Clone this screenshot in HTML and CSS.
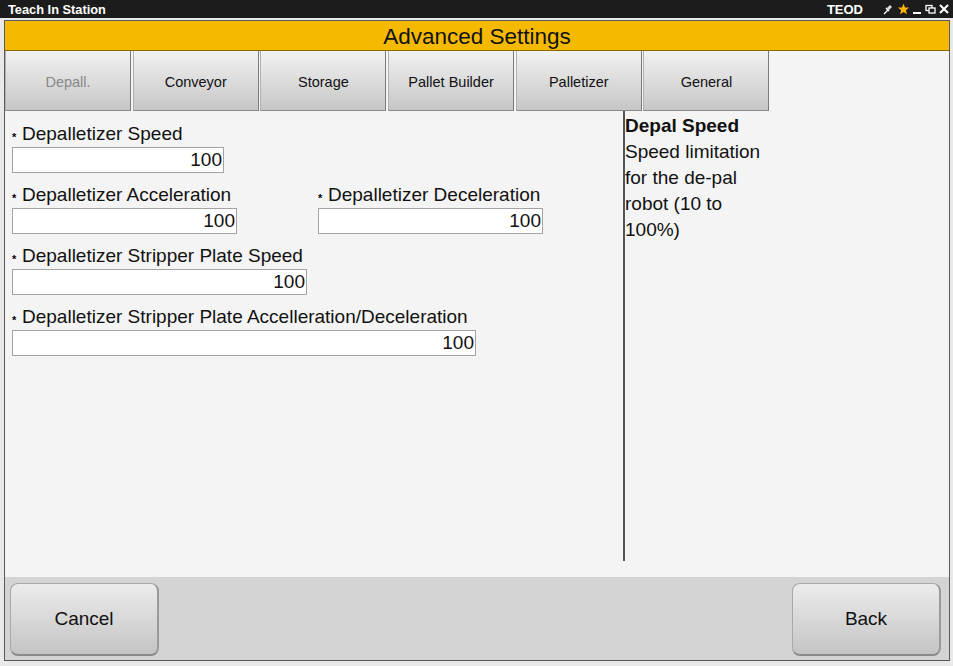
FILE: index.html
```html
<!DOCTYPE html>
<html>
<head>
<meta charset="utf-8">
<link rel="stylesheet" href="styles.css">
</head>
<body>
<div class="titlebar">
  <span class="app-title">Teach In Station</span>
  <div class="tb-right">
    <span class="teod">TEOD</span>
    <svg class="ic" width="12" height="12" viewBox="0 0 12 12"><path d="M2 11 L6 7" stroke="#fff" stroke-width="1.3"/><path d="M5 5 L8 2 L10 4 L7 7 Z" fill="#ddd"/><path d="M4 5 L7 8" stroke="#fff" stroke-width="1.5"/></svg>
    <svg class="ic" width="13" height="12" viewBox="0 0 13 12"><path d="M6.5 0.5 L8 4.4 L12.2 4.6 L8.9 7.2 L10 11.3 L6.5 9 L3 11.3 L4.1 7.2 L0.8 4.6 L5 4.4 Z" fill="#f7b500"/></svg>
    <svg class="ic" width="9" height="12" viewBox="0 0 9 12"><rect x="0" y="9" width="8" height="2" fill="#fff"/></svg>
    <svg class="ic" width="11" height="12" viewBox="0 0 11 12"><rect x="1" y="2.5" width="6" height="5" fill="none" stroke="#fff" stroke-width="1.3"/><rect x="4" y="5" width="6" height="5" fill="#1c1c1c" stroke="#fff" stroke-width="1.3"/></svg>
    <svg class="ic" width="10" height="12" viewBox="0 0 10 12"><path d="M1 2 L9 10 M9 2 L1 10" stroke="#fff" stroke-width="2"/></svg>
  </div>
</div>
<div class="frame">
  <div class="window">
    <div class="header">Advanced Settings</div>
    <div class="tabs">
      <div class="tab active">Depall.</div>
      <div class="tab">Conveyor</div>
      <div class="tab">Storage</div>
      <div class="tab">Pallet Builder</div>
      <div class="tab">Palletizer</div>
      <div class="tab">General</div>
    </div>
    <div class="body">
      <div class="form">
        <div class="row">
          <div class="field">
            <div class="label"><span class="star">*</span>Depalletizer Speed</div>
            <div class="input w1">100</div>
          </div>
        </div>
        <div class="row">
          <div class="field col1">
            <div class="label"><span class="star">*</span>Depalletizer Acceleration</div>
            <div class="input w2">100</div>
          </div>
          <div class="field">
            <div class="label"><span class="star">*</span>Depalletizer Deceleration</div>
            <div class="input w2">100</div>
          </div>
        </div>
        <div class="row">
          <div class="field">
            <div class="label"><span class="star">*</span>Depalletizer Stripper Plate Speed</div>
            <div class="input w3">100</div>
          </div>
        </div>
        <div class="row">
          <div class="field">
            <div class="label"><span class="star">*</span>Depalletizer Stripper Plate Accelleration/Deceleration</div>
            <div class="input w4">100</div>
          </div>
        </div>
      </div>
      <div class="help">
        <div class="help-title">Depal Speed</div>
        <div class="help-text">Speed limitation for the de-pal robot (10 to 100%)</div>
      </div>
    </div>
    <div class="footer">
      <div class="btn">Cancel</div>
      <div class="btn">Back</div>
    </div>
  </div>
</div>
</body>
</html>
```
FILE: styles.css
```css
* { box-sizing: border-box; }
html, body { margin: 0; padding: 0; }
body {
  width: 953px;
  height: 666px;
  overflow: hidden;
  font-family: "Liberation Sans", Arial, sans-serif;
  background: #e9e9e9;
  display: flex;
  flex-direction: column;
}
.titlebar {
  height: 18px;
  background: #1c1c1c;
  color: #fff;
  display: flex;
  align-items: center;
  justify-content: space-between;
  padding: 0 4px 0 8px;
  font-weight: bold;
  font-size: 12.8px;
  flex: none;
}
.tb-right { display: flex; align-items: center; gap: 3px; }
.teod { margin-right: 16px; font-size: 13px; }
.ic { display: block; }
.frame {
  flex: 1;
  padding: 2px 4px 5px 4px;
  background: #e9e9e9;
  display: flex;
  min-height: 0;
}
.window {
  flex: 1;
  border: 1px solid #5a5a5a;
  background: #f4f4f4;
  display: flex;
  flex-direction: column;
  min-height: 0;
}
.header {
  height: 30px;
  background: #f5b900;
  border-bottom: 1px solid #8a6a00;
  text-align: center;
  font-size: 22.5px;
  line-height: 31px;
  color: #111;
  flex: none;
}
.tabs {
  display: flex;
  height: 60px;
  flex: none;
}
.tab {
  width: 126px;
  margin-right: 1.7px;
  background: linear-gradient(#f2f2f2, #c6c6c6);
  border-right: 1px solid #7a7a7a;
  border-bottom: 1px solid #8a8a8a;
  border-left: 1px solid #b0b0b0;
  display: flex;
  align-items: center;
  justify-content: center;
  font-size: 14.5px;
  color: #111;
  padding-top: 2px;
}
.tab.active { color: #888; }
.body {
  flex: 1;
  display: flex;
  min-height: 0;
}
.form {
  width: 618px;
  padding: 12px 0 0 7px;
  display: flex;
  flex-direction: column;
  gap: 11px;
}
.row { display: flex; }
.col1 { width: 306px; }
.label {
  font-size: 19px;
  line-height: 21px;
  height: 21px;
  color: #111;
  display: flex;
  align-items: center;
  margin-bottom: 3px;
}
.star {
  font-size: 11px;
  line-height: 10px;
  height: 10px;
  width: 10px;
  margin-top: 7px;
  color: #000;
  font-weight: bold;
}
.input {
  height: 26px;
  background: #fff;
  border: 1px solid #a4a4a4;
  font-size: 19px;
  text-align: right;
  line-height: 24px;
  padding-right: 1px;
  color: #111;
}
.w1 { width: 212px; }
.w2 { width: 225px; }
.w3 { width: 295px; }
.w4 { width: 464px; }
.help {
  width: 326px;
  margin-bottom: 16px;
  border-left: 2px solid #555;
  padding: 2px 0 0 0;
  font-size: 19px;
  line-height: 26px;
  color: #111;
}
.help-title { font-weight: bold; }
.help-text { width: 145px; }
.footer {
  height: 83px;
  background: #d4d4d4;
  display: flex;
  justify-content: space-between;
  align-items: flex-start;
  padding: 6px 8px 0 5px;
  flex: none;
}
.btn {
  width: 149px;
  height: 73px;
  border-radius: 8px;
  background: linear-gradient(#ececec, #c4c4c4);
  border: 1px solid #a8a8a8;
  border-bottom: 2px solid #8a8a8a;
  border-right: 2px solid #9a9a9a;
  display: flex;
  align-items: center;
  justify-content: center;
  font-size: 19px;
  color: #111;
}
```
